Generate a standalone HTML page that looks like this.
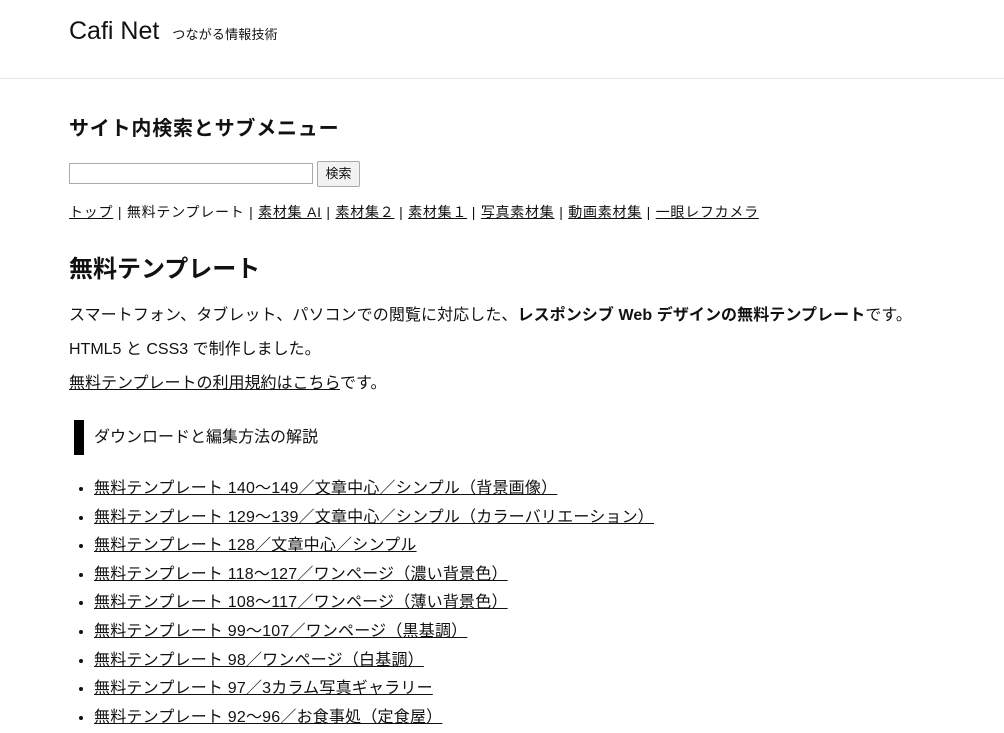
<!DOCTYPE html>
<html><head><meta charset="utf-8"><style>
body{margin:0;background:#fff;color:#111;font-family:"Liberation Sans","Noto Sans CJK JP",sans-serif;width:1004px;height:733px;overflow:hidden;position:relative}
.a{position:absolute;white-space:nowrap}
a{color:#111;text-decoration:underline}
.hr{position:absolute;left:0;top:78px;width:1004px;height:1px;background:#e6e6e6}
ul{position:absolute;left:70px;top:475px;margin:0;padding:0 0 0 24px;font-size:16px}
li{height:28.6px;line-height:28.6px;letter-spacing:0.2px}
</style></head><body>
<div class="a" style="left:69px;top:15px;font-size:25px;line-height:32px">Cafi Net <span style="font-size:13px;margin-left:6px;letter-spacing:0.2px">つながる情報技術</span></div>
<div class="hr"></div>
<div class="a" style="left:69px;top:114px;font-size:20px;font-weight:bold;line-height:30px;letter-spacing:0.8px">サイト内検索とサブメニュー</div>
<div class="a" style="left:69px;top:163px;width:242px;height:19px;border:1px solid #aaa"></div>
<div class="a" style="left:317px;top:161px;width:41px;height:24px;border:1px solid #aaa;background:#f2f2f2;font-size:13px;line-height:24px;text-align:center;border-radius:2px">検索</div>
<div class="a" style="left:69px;top:202px;font-size:14px;line-height:20px;letter-spacing:0.75px"><a>トップ</a> | 無料テンプレート | <a>素材集 AI</a> | <a>素材集２</a> | <a>素材集１</a> | <a>写真素材集</a> | <a>動画素材集</a> | <a>一眼レフカメラ</a></div>
<div class="a" style="left:69px;top:253px;font-size:24px;font-weight:bold;line-height:34px">無料テンプレート</div>
<div class="a" style="left:69px;top:304px;font-size:16px;line-height:24px;letter-spacing:0.08px">スマートフォン、タブレット、パソコンでの閲覧に対応した、<b>レスポンシブ Web デザインの無料テンプレート</b>です。</div>
<div class="a" style="left:69px;top:338px;font-size:16px;line-height:24px">HTML5 と CSS3 で制作しました。</div>
<div class="a" style="left:69px;top:372px;font-size:16px;line-height:24px"><a>無料テンプレートの利用規約はこちら</a>です。</div>
<div class="a" style="left:74px;top:420px;width:10px;height:35px;background:#000"></div>
<div class="a" style="left:94px;top:426px;font-size:16px;line-height:24px">ダウンロードと編集方法の解説</div>
<ul>
<li><a>無料テンプレート 140～149／文章中心／シンプル（背景画像）</a></li>
<li><a>無料テンプレート 129～139／文章中心／シンプル（カラーバリエーション）</a></li>
<li><a>無料テンプレート 128／文章中心／シンプル</a></li>
<li><a>無料テンプレート 118～127／ワンページ（濃い背景色）</a></li>
<li><a>無料テンプレート 108～117／ワンページ（薄い背景色）</a></li>
<li><a>無料テンプレート 99～107／ワンページ（黒基調）</a></li>
<li><a>無料テンプレート 98／ワンページ（白基調）</a></li>
<li><a>無料テンプレート 97／3カラム写真ギャラリー</a></li>
<li><a>無料テンプレート 92～96／お食事処（定食屋）</a></li>
</ul>
</body></html>
